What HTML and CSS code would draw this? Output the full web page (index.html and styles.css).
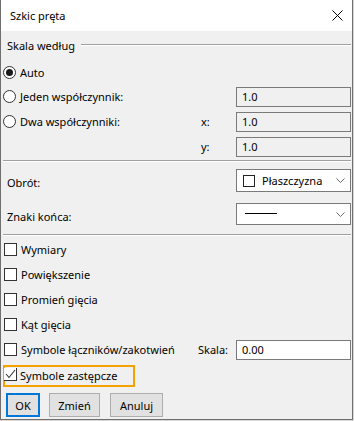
FILE: index.html
```html
<!DOCTYPE html>
<html lang="pl">
<head>
<meta charset="utf-8">
<title>Szkic pręta</title>
<link rel="stylesheet" href="styles.css">
</head>
<body>
<div class="dialog">
  <div class="titlebar">
    <span class="title">Szkic pręta</span>
    <svg class="close" width="11" height="11" viewBox="0 0 11 11"><path d="M0.5 0.5 L10.5 10.5 M10.5 0.5 L0.5 10.5" stroke="#000" stroke-width="1" fill="none"/></svg>
  </div>
  <div class="content">
    <div class="group-head"><span>Skala według</span><div class="rule"></div></div>

    <div class="row r24"><span class="radio checked"></span><span class="lbl">Auto</span></div>
    <div class="row r25"><span class="radio"></span><span class="lbl grow">Jeden współczynnik:</span><span class="field">1.0</span></div>
    <div class="row r25"><span class="radio"></span><span class="lbl grow">Dwa współczynniki:</span><span class="axis">x:</span><span class="field">1.0</span></div>
    <div class="row r25"><span class="grow"></span><span class="axis">y:</span><span class="field">1.0</span></div>

    <div class="sep first"></div>

    <div class="row combo-row one">
      <span class="clabel grow">Obrót:</span>
      <div class="combo tall">
        <span class="minibox"></span><span class="ctext">Płaszczyzna</span>
        <svg class="chev" width="9" height="5" viewBox="0 0 9 5"><path d="M0.5 0.5 L4.5 4.5 L8.5 0.5" stroke="#6a6a6a" fill="none"/></svg>
      </div>
    </div>
    <div class="row combo-row two">
      <span class="clabel grow">Znaki końca:</span>
      <div class="combo">
        <span class="endline"></span>
        <svg class="chev" width="9" height="5" viewBox="0 0 9 5"><path d="M0.5 0.5 L4.5 4.5 L8.5 0.5" stroke="#6a6a6a" fill="none"/></svg>
      </div>
    </div>

    <div class="sep second"></div>

    <div class="checks">
      <div class="row r25"><span class="check"></span><span class="lbl">Wymiary</span></div>
      <div class="row r25"><span class="check"></span><span class="lbl">Powiększenie</span></div>
      <div class="row r25"><span class="check"></span><span class="lbl">Promień gięcia</span></div>
      <div class="row r25"><span class="check"></span><span class="lbl">Kąt gięcia</span></div>
      <div class="row r25"><span class="check"></span><span class="lbl grow">Symbole łączników/zakotwień</span><span class="axis skala">Skala:</span><span class="field white">0.00</span></div>
      <div class="row r25 focus-row">
        <div class="focus">
          <span class="check checked"><svg width="11" height="10" viewBox="0 0 11 10"><path d="M1 5 L4 8.5 L10 1" stroke="#333" stroke-width="1.1" fill="none"/></svg></span>
          <span class="lbl">Symbole zastępcze</span>
        </div>
      </div>
    </div>

    <div class="buttons">
      <button class="btn default ok">OK</button>
      <button class="btn zmien">Zmień</button>
      <button class="btn anuluj">Anuluj</button>
    </div>
  </div>
</div>
</body>
</html>
```
FILE: styles.css
```css
html, body {
  margin: 0;
  padding: 0;
  background: #d8d8d8;
}
body {
  font-family: "Noto Sans", "Open Sans", sans-serif;
  font-size: 11px;
  color: #000;
  width: 354px;
  height: 421px;
  overflow: hidden;
}
.dialog {
  width: 353px;
  height: 420px;
  box-sizing: border-box;
  border-left: 1px solid #6f6f6f;
  border-right: 1px solid #6f6f6f;
  border-bottom: 1px solid #6f6f6f;
  background: #f0f0f0;
  display: flex;
  flex-direction: column;
}
.titlebar {
  height: 31px;
  background: #fff;
  display: flex;
  align-items: center;
  padding: 0 9px 0 9px;
  flex: none;
}
.title {
  flex: 1;
  font-size: 11px;
  line-height: 1;
  padding-bottom: 1px;
}
.close {
  display: block;
}
.content {
  padding: 0 1px 0 2px;
  display: flex;
  flex-direction: column;
}
.group-head {
  height: 29px;
  display: flex;
  align-items: center;
  padding-left: 4px;
}
.rule {
  flex: 1;
  margin-left: 6px;
  height: 0;
  border-top: 1px solid #a0a0a0;
  border-bottom: 1px solid #fff;
  margin-top: -2px;
}
.row {
  display: flex;
  align-items: center;
}
.r24 { height: 24px; }
.r25 { height: 25px; }
.grow { flex: 1; }
.lbl {
  margin-left: 4px;
  white-space: nowrap;
}
.radio {
  width: 13px;
  height: 13px;
  box-sizing: border-box;
  border: 1px solid #333;
  border-radius: 50%;
  background: #fff;
  display: flex;
  align-items: center;
  justify-content: center;
  flex: none;
}
.radio.checked::after {
  content: "";
  width: 7px;
  height: 7px;
  border-radius: 50%;
  background: #1a1a1a;
}
.axis {
  width: 35px;
  flex: none;
}
.axis.skala {
  width: 38px;
}
.field {
  width: 115px;
  height: 20px;
  box-sizing: border-box;
  border: 1px solid #7a7a7a;
  background: #f0f0f0;
  display: flex;
  align-items: center;
  padding-left: 5px;
  flex: none;
}
.field.white {
  background: #fff;
  color: #000;
}
.sep {
  height: 0;
  border-top: 1px solid #a0a0a0;
  border-bottom: 1px solid #fff;
  flex: none;
}
.sep.first { margin-top: 1px; }
.sep.second { margin-top: 9px; }
.combo-row.one { margin-top: 7px; }
.combo-row.two { margin-top: 11px; }
.clabel {
  padding-left: 4px;
  padding-top: 4px;
}
.combo {
  width: 115px;
  height: 22px;
  box-sizing: border-box;
  border: 1px solid #7a7a7a;
  background: #fff;
  display: flex;
  align-items: center;
  padding-left: 6px;
  padding-right: 5px;
  flex: none;
}
.combo.tall {
  height: 23px;
}
.minibox {
  width: 12px;
  height: 12px;
  box-sizing: border-box;
  border: 1px solid #222;
  flex: none;
}
.ctext {
  margin-left: 7px;
  flex: 1;
}
.endline {
  width: 32px;
  height: 1px;
  background: #000;
  margin-left: 2px;
  margin-right: auto;
  margin-top: -1px;
}
.chev {
  display: block;
}
.checks {
  margin-top: 1px;
  display: flex;
  flex-direction: column;
}
.check {
  width: 13px;
  height: 13px;
  box-sizing: border-box;
  border: 1px solid #333;
  background: #fff;
  flex: none;
  margin-left: 1px;
}
.focus-row {
  align-items: flex-end;
}
.focus {
  width: 132px;
  height: 22px;
  box-sizing: border-box;
  border: 2px solid #f5a300;
  display: flex;
  align-items: center;
}
.check.checked {
  margin-left: -1px;
  border-left: none;
  border-top: none;
  display: flex;
  align-items: center;
  justify-content: center;
  width: 13px;
  height: 13px;
  margin-top: -3px;
}
.check.checked svg { display: block; }
.focus .lbl {
  margin-left: 3px;
  margin-top: -1px;
}
.buttons {
  margin-top: 6px;
  display: flex;
  padding-left: 3px;
}
.btn {
  height: 24px;
  box-sizing: border-box;
  border: 1px solid #adadad;
  background: #e1e1e1;
  font: inherit;
  color: #000;
  padding: 0;
  margin: 0;
}
.btn.default {
  border: 2px solid #0078d7;
}
.ok { width: 34px; }
.zmien { width: 51px; margin-left: 9px; }
.anuluj { width: 53px; margin-left: 10px; }
```
